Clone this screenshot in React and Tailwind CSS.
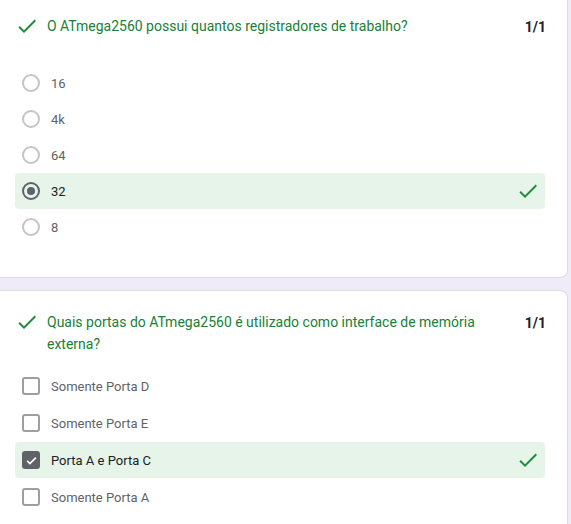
import React from "react";

const Done = ({ className }) => (
  <svg viewBox="0 0 24 24" className={className} fill="currentColor">
    <path d="M9 16.2L4.8 12l-1.4 1.4L9 19 21 7l-1.4-1.4L9 16.2z" />
  </svg>
);

function Radio({ checked }) {
  return (
    <div
      className={
        "w-[18px] h-[18px] rounded-full border-2 flex items-center justify-center shrink-0 " +
        (checked ? "border-[#5f6368]" : "border-[#c4c4c4]")
      }
    >
      {checked && <div className="w-[8px] h-[8px] rounded-full bg-[#5f6368]" />}
    </div>
  );
}

function Box({ checked }) {
  if (checked)
    return (
      <div className="w-[18px] h-[18px] rounded-[3px] bg-[#5f6368] flex items-center justify-center shrink-0">
        <svg viewBox="0 0 24 24" className="w-[15px] h-[15px]" fill="none" stroke="white" strokeWidth="2.6">
          <path d="M5 12.5l4.5 4.5L19 7.5" />
        </svg>
      </div>
    );
  return <div className="w-[18px] h-[18px] rounded-[3px] border-2 border-[#9e9e9e] shrink-0" />;
}

function Option({ label, selected, type }) {
  return (
    <div
      className={
        "h-9 flex items-center pl-[7px] pr-[5px] rounded-[4px] " +
        (selected ? "bg-[#e6f4ea]" : "")
      }
    >
      {type === "radio" ? <Radio checked={selected} /> : <Box checked={selected} />}
      <span
        className={
          "ml-[11px] pt-px text-[13px] flex-1 " + (selected ? "text-[#202124]" : "text-[#5f6368]")
        }
      >
        {label}
      </span>
      {selected && <Done className="w-6 h-6 text-[#1e8e3e]" />}
    </div>
  );
}

export default function App() {
  const font = { fontFamily: "Roboto, 'Noto Sans', Arial, sans-serif" };
  return (
    <div className="w-[571px] h-[524px] bg-[#f0ebf8] overflow-hidden" style={font}>
      {/* Card 1 */}
      <div className="w-[568px] h-[278px] bg-white border-r border-b border-[#dadce0] rounded-br-lg">
        <div className="flex items-start pt-[14px] pl-[15px] pr-[21px]">
          <Done className="w-6 h-6 text-[#1e8e3e] shrink-0" />
          <div className="ml-[8px] pt-[2px] flex-1 text-[14px] leading-5 text-[#188038]">
            O ATmega2560 possui quantos registradores de trabalho?
          </div>
          <div className="pt-[3px] text-[14px] leading-5 font-bold text-[#202124]">1/1</div>
        </div>
        <div className="mt-[27px] ml-[15px] mr-[22px] flex flex-col">
          <Option type="radio" label="16" />
          <Option type="radio" label="4k" />
          <Option type="radio" label="64" />
          <Option type="radio" label="32" selected />
          <Option type="radio" label="8" />
        </div>
      </div>

      {/* Card 2 */}
      <div className="mt-[12px] w-[568px] h-[260px] bg-white border-t border-r border-[#dadce0] rounded-tr-lg">
        <div className="flex items-start pt-[20px] pl-[15px] pr-[21px]">
          <Done className="w-6 h-6 text-[#1e8e3e] shrink-0 mt-[-1px]" />
          <div className="ml-[8px] flex-1 pr-[34px] text-[14px] leading-[22px] text-[#188038]">
            Quais portas do ATmega2560 é utilizado como interface de memória externa?
          </div>
          <div className="pt-px text-[14px] leading-[22px] font-bold text-[#202124]">1/1</div>
        </div>
        <div className="mt-[13px] ml-[15px] mr-[22px] flex flex-col gap-px">
          <Option type="box" label="Somente Porta D" />
          <Option type="box" label="Somente Porta E" />
          <Option type="box" label="Porta A e Porta C" selected />
          <Option type="box" label="Somente Porta A" />
        </div>
      </div>
    </div>
  );
}
